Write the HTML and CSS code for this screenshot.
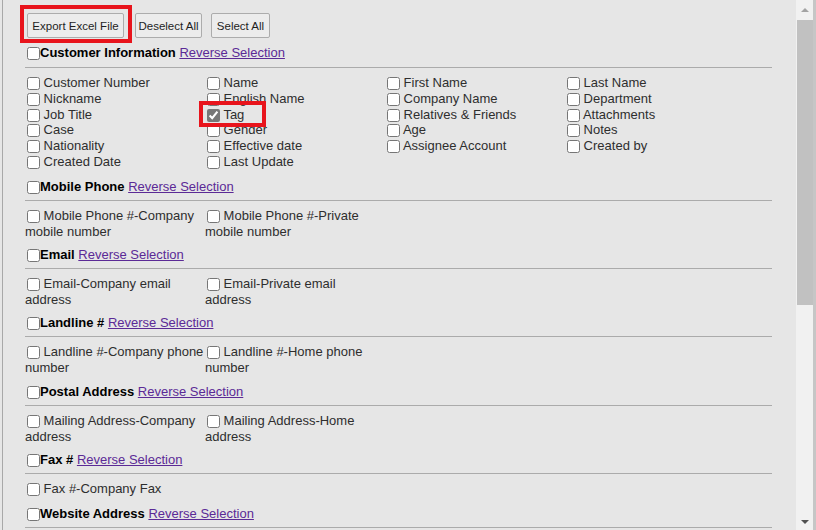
FILE: index.html
```html
<!DOCTYPE html>
<html>
<head>
<meta charset="utf-8">
<link rel="stylesheet" href="styles.css">
</head>
<body>
<div class="window">
  <main class="panel">
    <div class="toolbar">
      <button class="btn btn-export">Export Excel File</button>
      <button class="btn btn-deselect">Deselect All</button>
      <button class="btn btn-select">Select All</button>
    </div>

    <section class="group group-first">
      <div class="group-head"><input type="checkbox"><b>Customer Information</b> <a href="#">Reverse Selection</a></div>
      <hr class="rule">
      <div class="fields fields-4">
        <label class="field"><input type="checkbox"> Customer Number</label>
        <label class="field"><input type="checkbox"> Name</label>
        <label class="field"><input type="checkbox"> First Name</label>
        <label class="field"><input type="checkbox"> Last Name</label>
        <label class="field"><input type="checkbox"> Nickname</label>
        <label class="field"><input type="checkbox"> English Name</label>
        <label class="field"><input type="checkbox"> Company Name</label>
        <label class="field"><input type="checkbox"> Department</label>
        <label class="field"><input type="checkbox"> Job Title</label>
        <label class="field"><input type="checkbox" class="is-checked" checked> Tag</label>
        <label class="field"><input type="checkbox"> Relatives &amp; Friends</label>
        <label class="field"><input type="checkbox"> Attachments</label>
        <label class="field"><input type="checkbox"> Case</label>
        <label class="field"><input type="checkbox"> Gender</label>
        <label class="field"><input type="checkbox"> Age</label>
        <label class="field"><input type="checkbox"> Notes</label>
        <label class="field"><input type="checkbox"> Nationality</label>
        <label class="field"><input type="checkbox"> Effective date</label>
        <label class="field"><input type="checkbox"> Assignee Account</label>
        <label class="field"><input type="checkbox"> Created by</label>
        <label class="field"><input type="checkbox"> Created Date</label>
        <label class="field"><input type="checkbox"> Last Update</label>
      </div>
    </section>

    <section class="group">
      <div class="group-head"><input type="checkbox"><b>Mobile Phone</b> <a href="#">Reverse Selection</a></div>
      <hr class="rule">
      <div class="fields fields-2">
        <label class="field"><input type="checkbox"> Mobile Phone #-Company mobile number</label>
        <label class="field"><input type="checkbox"> Mobile Phone #-Private mobile number</label>
      </div>
    </section>

    <section class="group">
      <div class="group-head"><input type="checkbox"><b>Email</b> <a href="#">Reverse Selection</a></div>
      <hr class="rule">
      <div class="fields fields-2">
        <label class="field"><input type="checkbox"> Email-Company email address</label>
        <label class="field"><input type="checkbox"> Email-Private email address</label>
      </div>
    </section>

    <section class="group group-wide">
      <div class="group-head"><input type="checkbox"><b>Landline #</b> <a href="#">Reverse Selection</a></div>
      <hr class="rule">
      <div class="fields fields-2">
        <label class="field"><input type="checkbox"> Landline #-Company phone number</label>
        <label class="field"><input type="checkbox"> Landline #-Home phone number</label>
      </div>
    </section>

    <section class="group">
      <div class="group-head"><input type="checkbox"><b>Postal Address</b> <a href="#">Reverse Selection</a></div>
      <hr class="rule">
      <div class="fields fields-2">
        <label class="field"><input type="checkbox"> Mailing Address-Company address</label>
        <label class="field"><input type="checkbox"> Mailing Address-Home address</label>
      </div>
    </section>

    <section class="group group-single">
      <div class="group-head"><input type="checkbox"><b>Fax #</b> <a href="#">Reverse Selection</a></div>
      <hr class="rule">
      <div class="fields fields-2">
        <label class="field"><input type="checkbox"> Fax #-Company Fax</label>
      </div>
    </section>

    <section class="group">
      <div class="group-head"><input type="checkbox"><b>Website Address</b> <a href="#">Reverse Selection</a></div>
      <hr class="rule">
    </section>

    <span class="mark mark-export"></span>
    <span class="mark mark-tag"></span>
  </main>

  <div class="scrollbar">
    <div class="sb-btn sb-up"><span class="arrow arrow-up"></span></div>
    <div class="sb-thumb"></div>
    <div class="sb-track"></div>
    <div class="sb-btn sb-down"><span class="arrow arrow-down"></span></div>
  </div>
</div>
</body>
</html>
```

FILE: styles.css
```css
html, body {
  margin: 0;
  padding: 0;
  background: #e6e6e6;
}

.window {
  display: flex;
  width: 816px;
  height: 530px;
  overflow: hidden;
  font-family: "Liberation Sans", Arial, sans-serif;
  font-size: 13px;
  color: #2e2e2e;
}

.panel {
  position: relative;
  flex: 1;
  margin-left: 2px;
  border-left: 1px solid #a8a8a8;
  padding: 13px 24px 0 22px;
  overflow: hidden;
}

.toolbar {
  display: flex;
  height: 25px;
  padding-left: 2px;
}

.btn {
  height: 25px;
  padding: 0;
  margin: 0;
  border: 1px solid #acacac;
  border-radius: 2px;
  background: #ececec;
  color: #1e1e1e;
  font-family: "Liberation Sans", Arial, sans-serif;
  font-size: 11.5px;
  white-space: nowrap;
}

.btn-export {
  width: 97px;
  margin-right: 11px;
}

.btn-deselect {
  width: 67px;
  margin-right: 9px;
}

.btn-select {
  width: 59px;
}

.group {
  margin-bottom: 7px;
}

.group-first {
  margin-top: 7px;
  margin-bottom: 9px;
}

.group-wide {
  margin-bottom: 8px;
}

.group-single {
  margin-bottom: 9px;
}

.group-head {
  line-height: 16px;
  color: #000;
}

.group-head b {
  font-weight: bold;
}

.group-head a {
  color: #5b2a96;
  text-decoration: underline;
}

input[type="checkbox"] {
  width: 13px;
  height: 13px;
  margin: 0 0 0 2px;
  vertical-align: -3px;
}

input.is-checked {
  accent-color: #777777;
}

.rule {
  margin: 5px 0 7px;
  border: 0;
  border-top: 1px solid #ababab;
  height: 0;
}

.group-first .rule {
  margin-top: 6px;
}

.fields {
  display: grid;
}

.fields-4 {
  grid-template-columns: repeat(4, 180px);
  line-height: 15.8px;
}

.fields-2 {
  grid-template-columns: repeat(2, 180px);
  line-height: 16px;
}

.field {
  display: block;
}

.mark {
  position: absolute;
  border: 4px solid #e8141c;
  box-sizing: border-box;
}

.mark-export {
  left: 17px;
  top: 5px;
  width: 112px;
  height: 38px;
}

.mark-tag {
  left: 196px;
  top: 101px;
  width: 67px;
  height: 26px;
}

.scrollbar {
  display: flex;
  flex-direction: column;
  width: 17px;
  background: #f1f1f1;
  border-right: 3px solid #c6c6c6;
}

.sb-btn {
  display: flex;
  align-items: center;
  justify-content: center;
  height: 20px;
}

.sb-down {
  height: 17px;
}

.arrow {
  width: 0;
  height: 0;
  border-left: 4px solid transparent;
  border-right: 4px solid transparent;
}

.arrow-up {
  border-bottom: 4px solid #a3a3a3;
}

.arrow-down {
  border-top: 4px solid #505050;
}

.sb-thumb {
  height: 285px;
  margin: 0 0 0 1px;
  background: #c1c1c1;
}

.sb-track {
  flex: 1;
}
```
